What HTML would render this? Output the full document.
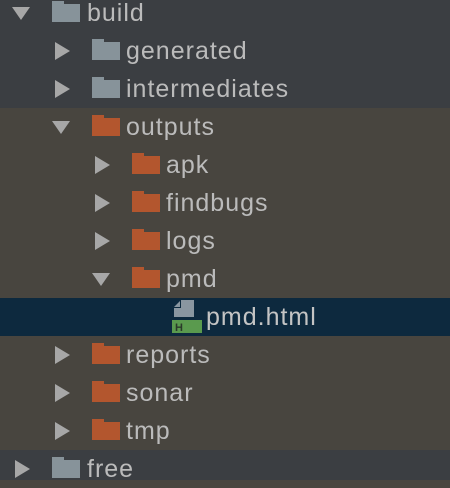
<!DOCTYPE html>
<html><head><style>
body{margin:0;width:450px;height:476px;overflow:hidden;background:#48453f;font-family:"Liberation Sans",sans-serif}
.r{position:absolute;left:0;width:450px;height:38px}
.t{position:absolute;font-size:25px;letter-spacing:1px;color:#bbbbbb;line-height:38px;top:0}
.f{position:absolute;top:10px;width:28px;height:18px}
.f:before{content:"";position:absolute;left:0;top:-3px;width:12px;height:4px;background:inherit}
.g{background:#87939a}.o{background:#b3562e}
.dn{position:absolute;top:13px;width:0;height:0;border-left:9px solid transparent;border-right:9px solid transparent;border-top:13px solid #a7a7a7}
.rt{position:absolute;top:10px;width:0;height:0;border-top:9px solid transparent;border-bottom:9px solid transparent;border-left:15px solid #a7a7a7}
</style></head><body>
<div class="r" style="top:-6px;height:114px;background:#3b3e42"></div>
<div class="r" style="top:450px;height:30px;background:#3b3e42"></div>
<div class="r" style="top:298px;background:#0d293e"></div>

<div class="r" style="top:-6px"><div class="dn" style="left:12px"></div><div class="f g" style="left:52px"></div><div class="t" style="left:87px">build</div></div>
<div class="r" style="top:32px"><div class="rt" style="left:55px"></div><div class="f g" style="left:92px"></div><div class="t" style="left:126px">generated</div></div>
<div class="r" style="top:70px"><div class="rt" style="left:55px"></div><div class="f g" style="left:92px"></div><div class="t" style="left:126px">intermediates</div></div>
<div class="r" style="top:108px"><div class="dn" style="left:52px"></div><div class="f o" style="left:92px"></div><div class="t" style="left:126px">outputs</div></div>
<div class="r" style="top:146px"><div class="rt" style="left:95px"></div><div class="f o" style="left:132px"></div><div class="t" style="left:166px">apk</div></div>
<div class="r" style="top:184px"><div class="rt" style="left:95px"></div><div class="f o" style="left:132px"></div><div class="t" style="left:166px">findbugs</div></div>
<div class="r" style="top:222px"><div class="rt" style="left:95px"></div><div class="f o" style="left:132px"></div><div class="t" style="left:166px">logs</div></div>
<div class="r" style="top:260px"><div class="dn" style="left:92px"></div><div class="f o" style="left:132px"></div><div class="t" style="left:166px">pmd</div></div>
<div class="r" style="top:298px">
<svg style="position:absolute;left:172px;top:2px" width="32" height="34"><path d="M9 0H22V17H2V8H9Z" fill="#8a96a0"/><path d="M2 7L8 1V7Z" fill="#8a96a0"/><rect x="0" y="20" width="30" height="13" fill="#5a9a4e"/><text x="3" y="31" font-family="Liberation Sans" font-weight="bold" font-size="11" fill="#2a3a2a">H</text></svg>
<div class="t" style="left:206px;color:#c4c4c4">pmd.html</div></div>
<div class="r" style="top:336px"><div class="rt" style="left:55px"></div><div class="f o" style="left:92px"></div><div class="t" style="left:126px">reports</div></div>
<div class="r" style="top:374px"><div class="rt" style="left:55px"></div><div class="f o" style="left:92px"></div><div class="t" style="left:126px">sonar</div></div>
<div class="r" style="top:412px"><div class="rt" style="left:55px"></div><div class="f o" style="left:92px"></div><div class="t" style="left:126px">tmp</div></div>
<div class="r" style="top:450px"><div class="rt" style="left:15px"></div><div class="f g" style="left:52px"></div><div class="t" style="left:87px">free</div></div>
</body></html>
